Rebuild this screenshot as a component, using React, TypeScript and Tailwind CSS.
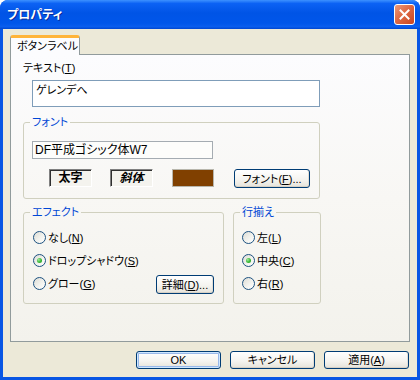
import React from "react";

const jp = "font-['Liberation_Sans','Noto_Sans_CJK_JP',sans-serif] [font-feature-settings:'palt']";

function Key({ k }: { k: string }) {
  return (
    <>
      (<span className="underline underline-offset-[1px]">{k}</span>)
    </>
  );
}

function XpButton({
  children,
  className = "",
  primary = false,
}: {
  children: React.ReactNode;
  className?: string;
  primary?: boolean;
}) {
  return (
    <button
      className={`flex items-center justify-center whitespace-nowrap rounded-[3px] border border-[#003C74] bg-[linear-gradient(180deg,#FFFFFF_0%,#F5F4F0_55%,#E6E3DA_100%)] text-[11px] leading-[14px] text-black ${
        primary
          ? "shadow-[inset_0_0_0_1px_#CEE7FF,inset_0_0_0_2px_#98B8EA]"
          : "shadow-[inset_0_-1px_0_#D6D0C5,inset_-1px_0_0_#E2DED5]"
      } ${className}`}
    >
      {children}
    </button>
  );
}

function Radio({ checked = false, children }: { checked?: boolean; children: React.ReactNode }) {
  return (
    <div className="flex h-[23px] items-center gap-[2px] whitespace-nowrap">
      <span className="flex h-[13px] w-[13px] shrink-0 items-center justify-center rounded-full border border-[#1C5180] bg-[linear-gradient(135deg,#DCDCD5_0%,#F4F4F0_60%,#FFFFFF_100%)]">
        {checked && (
          <span className="h-[5px] w-[5px] rounded-full bg-[radial-gradient(circle_at_35%_35%,#A4EA9F_0%,#3DBB3A_50%,#1F9A1D_100%)]" />
        )}
      </span>
      <span>{children}</span>
    </div>
  );
}

function Group({
  title,
  className = "",
  children,
}: {
  title: string;
  className?: string;
  children: React.ReactNode;
}) {
  return (
    <fieldset className={`rounded-[3px] border border-[#D0D0BF] px-[6px] ${className}`}>
      <legend className="px-[2px] leading-[14px] text-[#0046D5]">{title}</legend>
      {children}
    </fieldset>
  );
}

export default function App() {
  return (
    <div
      className={`flex h-[380px] w-[420px] flex-col overflow-hidden rounded-t-[8px] bg-[#0856E4] text-[11px] leading-[14px] text-black ${jp}`}
    >
      <div className="flex h-[29px] shrink-0 items-center justify-between bg-[linear-gradient(180deg,#3D91FF_0%,#0C62F4_12%,#0054E6_45%,#0056EA_80%,#0A5EEE_92%,#0046D0_100%)] pl-[7px] pr-[5px]">
        <span className="text-[12px] font-bold text-white [text-shadow:1px_1px_0_#0A2A9A]">プロパティ</span>
        <div className="flex h-[21px] w-[21px] items-center justify-center rounded-[3px] border border-white bg-[linear-gradient(135deg,#EC9A7A_0%,#DE6A45_45%,#C9441F_100%)]">
          <svg width="11" height="11" viewBox="0 0 11 11">
            <path d="M1.5 1.5 L9.5 9.5 M9.5 1.5 L1.5 9.5" stroke="white" strokeWidth="2" strokeLinecap="square" />
          </svg>
        </div>
      </div>

      <div className="mx-[3px] mb-[3px] flex flex-1 flex-col bg-[#ECE9D8] px-[7px] pt-[6px]">
        <div className="flex h-[19px]">
          <div className="relative z-10 -mb-px h-[20px] w-[70px] whitespace-nowrap rounded-t-[3px] border-x border-t-[3px] border-x-[#919B9C] border-t-[#FFB43A] bg-[#FCFCFE] pl-[6px] pt-[1px]">
            ボタンラベル
          </div>
        </div>

        <div className="flex h-[288px] w-[400px] flex-col border border-[#919B9C] bg-[linear-gradient(180deg,#FCFCFE_0%,#F8F7F4_50%,#F3F2EC_100%)] pl-[12px] pt-[6px]">
          <div>
            テキスト<Key k="T" />
          </div>
          <div className="ml-[9px] mt-[5px] h-[27px] w-[288px] border border-[#7F9DB9] bg-white pl-[3px] pt-[2px]">
            ゲレンデへ
          </div>

          <Group title="フォント" className="mt-[8px] h-[84px] w-[297px]">
            <div className="ml-[2px] mt-[12px] h-[18px] w-[181px] border border-[#A5ACB2] bg-[#FDFDFB] pl-[2px] pt-[1px] text-[12px]">
              DF平成ゴシック体W7
            </div>
            <div className="ml-[19px] mt-[10px] flex items-start">
              <div className="flex h-[18px] w-[43px] items-center justify-center border border-b-white border-l-[#808080] border-r-white border-t-[#808080] bg-[#F4F3EE] text-[12px] font-bold shadow-[inset_1px_1px_0_#303030]">
                太字
              </div>
              <div className="ml-[18px] flex h-[18px] w-[43px] items-center justify-center border border-b-white border-l-[#808080] border-r-white border-t-[#808080] bg-[#F4F3EE] text-[12px] font-semibold italic shadow-[inset_1px_1px_0_#303030]">
                斜体
              </div>
              <div className="ml-[19px] h-[18px] w-[42px] border border-[#B8B6AC] bg-[#804000]" />
              <XpButton className="ml-[20px] h-[19px] w-[76px]">
                フォント<Key k="F" />...
              </XpButton>
            </div>
          </Group>

          <div className="mt-[6px] flex gap-[9px]">
            <Group title="エフェクト" className="h-[99px] w-[201px]">
              <div className="ml-[3px] mt-[7px] flex flex-col">
                <Radio>
                  なし<Key k="N" />
                </Radio>
                <Radio checked>
                  ドロップシャドウ<Key k="S" />
                </Radio>
                <div className="flex items-center">
                  <Radio>
                    グロー<Key k="G" />
                  </Radio>
                  <XpButton className="ml-auto mr-[3px] mt-[2px] h-[19px] w-[58px]">
                    詳細<Key k="D" />...
                  </XpButton>
                </div>
              </div>
            </Group>
            <Group title="行揃え" className="h-[99px] w-[88px]">
              <div className="ml-[2px] mt-[7px] flex flex-col">
                <Radio>
                  左<Key k="L" />
                </Radio>
                <Radio checked>
                  中央<Key k="C" />
                </Radio>
                <Radio>
                  右<Key k="R" />
                </Radio>
              </div>
            </Group>
          </div>
        </div>

        <div className="mt-[9px] flex justify-end gap-[9px] pr-px">
          <XpButton primary className="h-[18px] w-[85px]">
            OK
          </XpButton>
          <XpButton className="h-[18px] w-[85px]">キャンセル</XpButton>
          <XpButton className="h-[18px] w-[85px]">
            適用<Key k="A" />
          </XpButton>
        </div>
      </div>
    </div>
  );
}
